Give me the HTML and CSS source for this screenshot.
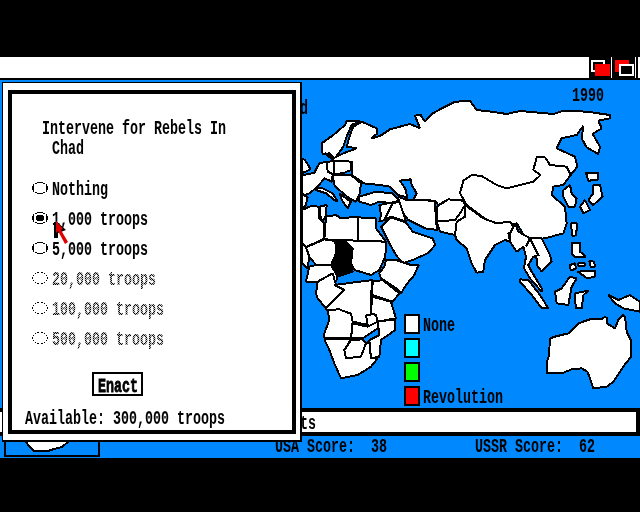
FILE: index.html
```html
<!DOCTYPE html>
<html lang="en">
<head>
<meta charset="utf-8">
<title>Balance of Power</title>
<link rel="stylesheet" href="styles.css">
</head>
<body>
<svg class="defs" width="0" height="0">
  <symbol id="radio" viewBox="0 0 16 12"><path d="M5 0h6v1H5zM3 1h2v1H3zM11 1h2v1h-2zM1 2h1v2H1zM14 2h1v2h-1zM0 4h2v4H0zM14 4h2v4h-2zM1 8h1v2H1zM14 8h1v2h-1zM3 10h2v1H3zM11 10h2v1h-2zM5 11h6v1H5z"/></symbol>
  <symbol id="radio-on" viewBox="0 0 16 12"><path d="M5 0h6v1H5zM3 1h2v1H3zM11 1h2v1h-2zM1 2h1v2H1zM14 2h1v2h-1zM0 4h2v4H0zM14 4h2v4h-2zM1 8h1v2H1zM14 8h1v2h-1zM3 10h2v1H3zM11 10h2v1h-2zM5 11h6v1H5zM5 3h6v1H5zM4 4h8v4H4zM5 8h6v1H5z"/></symbol>
  <symbol id="radio-off" viewBox="0 0 16 12"><path d="M5 0h2v1H5zM9 0h2v1H9zM3 1h1v1H3zM12 1h1v1h-1zM1 3h1v1H1zM14 3h1v1h-1zM0 5h1v2H0zM15 5h1v2h-1zM1 8h1v1H1zM14 8h1v1h-1zM3 10h1v1H3zM12 10h1v1h-1zM5 11h2v1H5zM9 11h2v1H9z"/></symbol>
</svg>
<div class="screen">
  <div class="menubar">
    <div class="winbtns">
      <svg class="winbtn" width="22" height="21" viewBox="0 0 22 21"><rect class="outline" x="3" y="4" width="12" height="10"/><rect class="red" x="6" y="7" width="15" height="12"/></svg>
      <svg class="winbtn second" width="23" height="21" viewBox="0 0 23 21"><rect class="red" x="3" y="3" width="14" height="12"/><rect class="outline filled" x="8" y="8" width="13" height="10"/></svg>
    </div>
  </div>
  <main class="board">
    <svg class="map" width="640" height="378" viewBox="0 80 640 378">
      <g class="z3" transform="translate(300 50) scale(.33333)">
        <polygon points="65,280 100,255 135,225 140,213 180,213 155,225 140,260 130,290 105,325 88,310 68,312 65,300"/>
        <polygon points="160,230 185,215 230,235 232,250 215,265 240,258 270,238 330,222 360,235 345,197 362,195 375,215 395,192 425,175 465,155 510,153 530,180 575,185 620,192 660,183 760,192 790,182 860,185 930,195 930,205 895,212 905,235 878,252 900,290 895,312 860,292 845,265 850,228 830,255 785,265 770,295 825,320 832,350 812,375 800,350 750,345 735,322 710,322 700,360 722,375 700,395 620,415 590,405 545,378 515,375 490,392 483,430 490,452 445,448 415,465 405,452 350,450 295,435 270,410 240,405 190,400 185,395 155,375 155,335 105,335 75,310 100,325 130,310 170,295 140,290 150,255"/>
        <polygon points="490,392 515,375 545,378 590,405 620,415 700,395 722,375 700,360 710,322 735,322 750,345 800,350 812,375 790,405 760,410 755,435 795,470 800,520 790,550 735,565 680,570 650,520 590,535 560,510 500,465 480,430"/>
        <polygon points="790,420 810,405 815,430 830,445 825,470 805,470 790,440"/>
        <polygon points="295,440 320,450 405,452 408,515 412,540 375,535 345,520 325,510 310,490 295,470"/>
        <polygon points="410,470 445,448 490,452 495,465 470,510 410,515"/>
        <polygon points="5,325 15,330 32,358 5,370"/>
        <polygon class="sea" points="300,392 333,388 335,405 350,430 340,450 322,450 318,420"/>
        <polygon points="858,368 895,368 893,390 865,392"/>
        <polygon points="880,405 900,405 908,440 880,465 865,450 880,430"/>
        <polygon points="840,470 855,450 870,480 850,490"/>
      </g>
      <g class="z6" transform="translate(296 160) scale(.33333)">
        <polygon points="92,5 135,3 165,5 165,30 140,40 110,42 95,35"/>
        <line class="border" x1="115" y1="5" x2="115" y2="40"/>
        <polygon points="18,45 40,42 55,38 70,10 92,5 95,35 110,42 108,65 85,55 65,80 40,100 25,105 18,100"/>
        <polygon points="18,105 35,110 30,135 18,145"/>
        <polygon points="60,82 80,85 110,100 125,125 115,120 90,100 60,90"/>
        <polygon points="110,45 165,45 195,70 190,105 180,125 160,115 130,90 115,75"/>
        <polygon points="130,100 150,115 165,125 155,145 140,125"/>
        <polygon points="190,110 240,95 290,100 310,120 290,130 250,125 225,135 190,125"/>
        <polygon points="18,150 45,138 70,140 70,175 85,190 85,235 30,262 18,250"/>
        <polygon points="72,140 92,135 90,165 80,185 72,165"/>
        <polygon points="90,170 120,165 135,175 185,170 185,245 125,240 85,238"/>
        <polygon points="185,172 240,175 240,205 270,245 185,245"/>
        <polygon points="125,240 270,245 268,290 250,330 225,345 175,330 165,310 170,265 150,260"/>
        <polygon class="chad" points="118,243 150,245 170,265 162,310 170,335 125,350 105,315 120,280"/>
        <polygon points="30,262 85,238 118,243 120,280 105,315 60,315 40,290"/>
        <polygon points="18,250 30,262 40,290 35,325 18,310"/>
        <polygon points="60,315 105,315 125,350 120,365 30,365 40,320"/>
        <polygon points="250,135 300,125 305,150 265,180 250,185 255,165"/>
        <polygon points="290,130 310,125 330,185 285,170 265,180"/>
        <polygon points="255,200 285,172 330,188 350,215 410,235 418,255 395,280 350,300 320,310 300,285 280,250 265,220"/>
      </g>
      <g class="z9" transform="translate(440 220) scale(.33333)">
        <polygon points="-10,5 45,0 60,-20 75,-45 75,-10 50,5 45,45 0,35"/>
        <polygon points="75,-45 130,-5 170,10 210,5 225,30 205,40 210,65 195,60 165,75 135,120 130,155 110,158 95,130 80,85 50,60 45,45 50,5 75,-10"/>
      </g>
      <g class="z7" transform="translate(296 260) scale(.33333)">
        <polygon points="270,0 300,0 345,15 368,15 355,45 330,75 315,100 300,85 255,55 250,40 265,20"/>
        <polygon points="65,65 110,40 120,75 145,85 135,105 90,145 65,115 60,100"/>
        <polygon points="205,160 245,160 250,190 215,205"/>
        <polygon points="115,75 230,60 225,105 225,165 210,165 215,195 170,185 165,160 130,150 90,150 90,145 145,90"/>
        <polygon points="230,65 260,60 310,100 290,125 228,105"/>
        <polygon points="228,110 285,125 300,175 245,185 240,165 225,160"/>
        <polygon points="95,150 130,148 165,162 170,185 165,235 85,235 85,220 100,180"/>
        <polygon points="170,190 215,200 245,185 245,205 200,235 165,235"/>
        <polygon points="245,185 298,178 298,210 255,240 250,290 225,295 220,240 250,225"/>
        <polygon points="85,238 165,238 145,270 150,295 195,290 210,250 220,245 225,295 245,295 225,320 185,345 135,355 115,310 100,270"/>
        <polygon points="165,240 200,238 210,250 195,290 150,295 145,270"/>
      </g>
      <g class="z8" transform="translate(500 200) scale(.33333)">
        <polygon points="30,100 45,70 55,95 90,115 125,115 150,165 155,185 125,215 110,195 110,175 100,170 85,195 95,215 125,265 125,275 90,235 72,205 78,170 70,140 50,155 30,125"/>
        <polyline class="border" points="78,140 90,115 115,165 100,170"/>
        <polygon points="60,238 85,240 120,285 145,325 125,325 95,285 60,245"/>
        <polygon points="210,230 230,235 215,260 205,315 170,310 165,275 185,265"/>
        <polygon points="225,280 265,272 250,285 245,325 228,325 225,300"/>
        <polygon points="215,130 240,128 240,155 258,170 225,172 215,160"/>
        <polygon points="212,70 232,70 228,105 218,110"/>
        <polygon points="235,190 255,190 255,198 235,198"/>
        <polygon points="268,183 282,185 285,200 272,200"/>
        <polygon points="210,195 225,190 228,205 212,212"/>
        <polygon points="233,215 285,212 285,230 262,235"/>
        <polygon points="325,285 355,300 390,285 419,305 419,335 370,325 345,310"/>
        <polygon points="150,415 165,410 205,400 235,370 270,358 305,358 315,350 322,355 320,370 345,385 355,360 368,345 375,350 380,395 392,420 393,470 370,500 340,545 320,560 280,565 270,535 262,515 245,505 215,508 185,520 140,518 140,490 147,465"/>
      </g>
    </svg>

    <div class="map-title"><span class="t">World</span></div>
    <div class="year"><span class="t">1990</span></div>

    <ul class="legend">
      <li class="legend-row"><i class="swatch white"></i><span class="t">None</span></li>
      <li class="legend-row"><i class="swatch cyan"></i></li>
      <li class="legend-row"><i class="swatch green"></i></li>
      <li class="legend-row"><i class="swatch redfill"></i><span class="t">Revolution</span></li>
    </ul>

    <div class="inset">
      <svg width="46" height="12" viewBox="0 0 46 12"><polygon class="ice" points="1,0 45,0 38,6 30,8 24,10 10,10 6,6"/></svg>
    </div>

    <div class="status"><span class="t">Events</span></div>
    <div class="scores">
      <div class="score"><span class="t">USA Score:  38</span></div>
      <div class="score last"><span class="t">USSR Score:  62</span></div>
    </div>

    <section class="dialog">
      <div class="panel">
        <div class="heading">
          <div class="line"><span class="t">Intervene for Rebels In</span></div>
          <div class="line indent"><span class="t">Chad</span></div>
        </div>
        <div class="options">
          <div class="option"><svg class="radio"><use href="#radio"/></svg><span class="t">Nothing</span></div>
          <div class="option"><svg class="radio"><use href="#radio-on"/></svg><span class="t">1,000 troops</span></div>
          <div class="option"><svg class="radio"><use href="#radio"/></svg><span class="t">5,000 troops</span></div>
          <div class="option"><svg class="radio"><use href="#radio-off"/></svg><span class="t off">20,000 troops</span></div>
          <div class="option"><svg class="radio"><use href="#radio-off"/></svg><span class="t off">100,000 troops</span></div>
          <div class="option"><svg class="radio"><use href="#radio-off"/></svg><span class="t off">500,000 troops</span></div>
        </div>
        <div class="enact"><span class="t heavy">Enact</span></div>
        <div class="available"><span class="t">Available: 300,000 troops</span></div>
      </div>
    </section>

    <svg class="cursor" width="16" height="26" viewBox="0 0 16 26">
      <polygon class="cursor-shadow" points="0,2 3,2 12,10 4,13 4,18 0,18"/>
      <polygon class="cursor-red" points="2,1 9,9 7,10 14,22 11,24 4,11 2,13"/>
    </svg>
  </main>
</div>
</body>
</html>
```
FILE: styles.css
```css
* { box-sizing: border-box; }
html, body { margin: 0; padding: 0; background: #000; }
body { width: 640px; height: 512px; overflow: hidden; }
.defs { position: absolute; }

.screen { display: flex; flex-direction: column; width: 640px; height: 512px; padding-top: 57px; background: #000; }

.t {
  display: inline-block;
  font: 700 20px/16px "Liberation Mono", monospace;
  white-space: pre;
  color: #000;
  transform: scaleX(.6667);
  transform-origin: 0 50%;
}
.t.heavy { -webkit-text-stroke: .8px #000; }
.t.off {
  color: transparent;
  background: repeating-conic-gradient(#000 0 25%, #fff 0 50%) 0 0 / 3px 2px;
  -webkit-background-clip: text;
  background-clip: text;
}

/* top bar */
.menubar { display: flex; justify-content: flex-end; height: 23px; background: #fff; border-bottom: 2px solid #000; }
.winbtns { display: flex; height: 21px; margin-right: 2px; padding-right: 2px; background: #000; }
.winbtn { display: block; margin-right: 1px; background: #000; box-shadow: 1px 0 0 #fff; }
.outline { fill: none; stroke: #fff; stroke-width: 2; shape-rendering: crispEdges; }
.outline.filled { fill: #000; }
.red { fill: #f00; }

/* board */
.board { position: relative; display: flex; flex-direction: column; justify-content: flex-end; height: 378px; background: #0088ff; }
.map { position: absolute; left: 0; top: 0; }
.map polygon { fill: #fff; stroke: #000; stroke-width: 6; stroke-linejoin: bevel; shape-rendering: crispEdges; }
.map polygon.sea { fill: #0088ff; }
.map polygon.chad { fill: #000; }
.map .border { fill: none; stroke: #000; stroke-width: 6; shape-rendering: crispEdges; }

.map-title { position: absolute; left: 268px; top: 20px; }
.year { position: absolute; left: 572px; top: 7px; }

.legend { position: absolute; left: 404px; top: 234px; display: flex; flex-direction: column; gap: 4px; margin: 0; padding: 0; list-style: none; }
.legend-row { display: flex; align-items: center; gap: 3px; height: 20px; }
.legend-row .t { position: relative; top: 2px; }
.swatch { display: block; width: 16px; height: 20px; border: 2px solid #000; }
.white { background: #fff; }
.cyan { background: #0ff; }
.green { background: #0f0; }
.redfill { background: #f00; }

.inset { position: absolute; left: 4px; top: 340px; width: 96px; height: 37px; border: 2px solid #000; display: flex; justify-content: center; align-items: flex-end; padding: 0 26px 2px 16px; }
.ice { fill: #fff; stroke: #000; stroke-width: 2; shape-rendering: crispEdges; }

.status { height: 28px; padding: 3px 0 0 268px; background: #fff; border: 4px solid #000; border-left: 0; }
.scores { display: flex; height: 22px; padding: 2px 0 0 275px; }
.score { flex: none; width: 200px; }
.score.last { width: 165px; }

/* dialog */
.dialog { position: absolute; left: 2px; top: 2px; width: 300px; height: 360px; padding: 7px 4px 6px 5px; background: #fff; border-style: solid; border-color: #000; border-width: 1px 2px 2px 1px; }
.panel { height: 344px; border: 4px solid #000; padding: 26px 0 0 13px; background: #fff; }
.heading { padding-left: 17px; }
.line { height: 20px; }
.line.indent { padding-left: 10px; }
.options { margin-top: 22px; padding-left: 7px; }
.option { display: flex; gap: 4px; height: 30px; }
.radio { display: block; width: 16px; height: 12px; fill: #000; }
.enact { width: 51px; height: 24px; margin: 10px 0 0 67px; padding: 4px 0 0 4px; border: 2px solid #000; }
.available { margin-top: 14px; }

.cursor { position: absolute; left: 54px; top: 140px; }
.cursor-shadow { fill: #000; }
.cursor-red { fill: #e00000; }
```
